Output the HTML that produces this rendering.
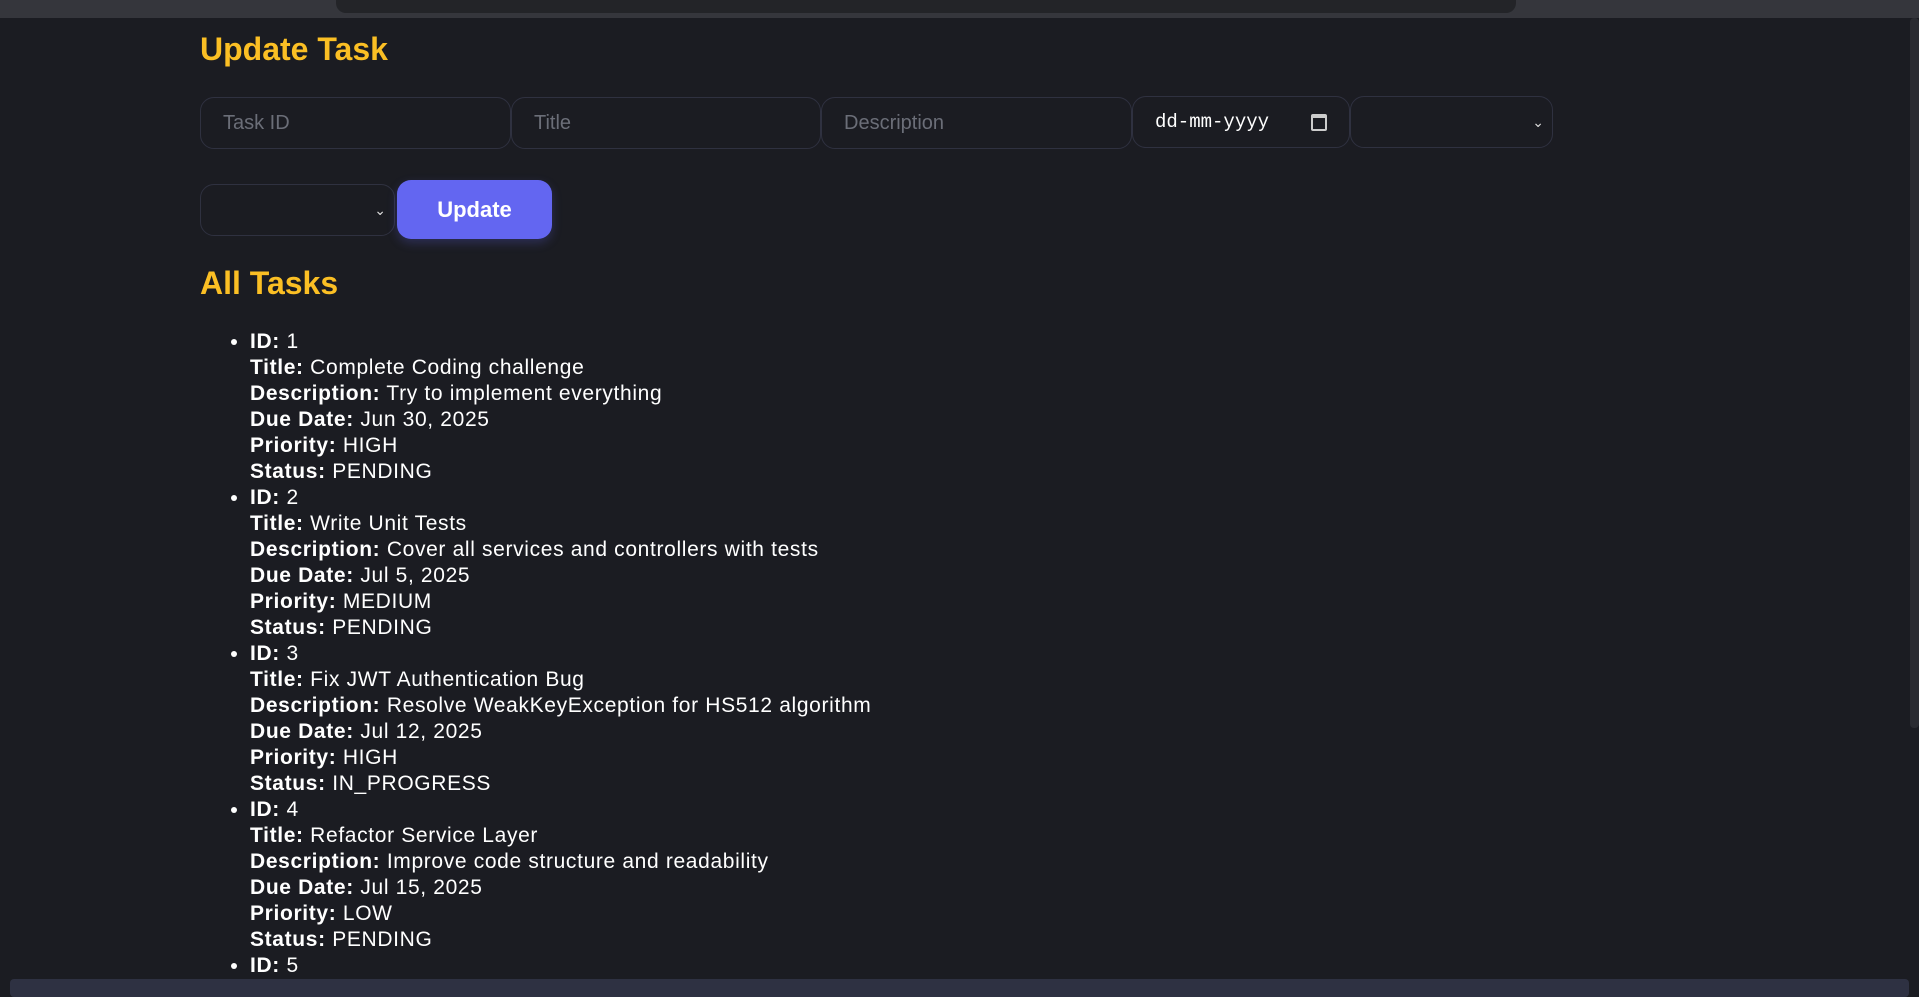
<!DOCTYPE html>
<html><head><meta charset="utf-8"><style>
*{box-sizing:border-box;margin:0;padding:0}
html,body{width:1919px;height:997px;overflow:hidden;background:#1b1c22;font-family:"Liberation Sans",sans-serif;color:#fff}
.chrome{position:absolute;left:0;top:0;width:1919px;height:18px;background:#35363c}
.url{position:absolute;left:336px;top:0;width:1180px;height:13px;background:#232428;border-radius:0 0 10px 10px}
h2{position:absolute;left:200px;color:#fbbf24;font-size:32px;font-weight:bold}
.in{position:absolute;height:52px;border:1px solid #2f3140;border-radius:14px;background:#1b1c22;color:#6b6e78;font-size:20px;padding-left:22px;line-height:50px}
.arrow{position:absolute;right:8px;top:0;color:#ddd;font-size:14px}
.btn{position:absolute;left:397px;top:180px;width:155px;height:59px;background:#6366f1;border-radius:14px;color:#fff;font-weight:bold;font-size:22px;text-align:center;line-height:59px;box-shadow:0 4px 10px rgba(99,102,241,.25)}
ul{position:absolute;left:250px;top:329px;font-size:21px;line-height:26px;list-style:disc;letter-spacing:0.65px}
li{margin:0}
.sbh{position:absolute;left:10px;top:979px;width:1899px;height:18px;background:#2e3142;border-radius:4px}
.sbv{position:absolute;left:1910px;top:18px;width:9px;height:710px;background:#2a2b31;border-radius:4px}
</style></head><body>
<div class="chrome"><div class="url"></div></div>
<h2 style="top:31px">Update Task</h2>
<div class="in" style="left:200px;top:97px;width:311px">Task ID</div>
<div class="in" style="left:511px;top:97px;width:310px">Title</div>
<div class="in" style="left:821px;top:97px;width:311px">Description</div>
<div class="in" style="left:1132px;top:96px;width:218px;color:#fff;font-family:'Liberation Mono',monospace;font-size:19px">dd-mm-yyyy<span style="position:absolute;right:22px;top:17px;width:16px;height:17px;border:2px solid #ccc;border-top-width:4px;border-radius:2px"></span></div>
<div class="in" style="left:1350px;top:96px;width:203px"><span class="arrow">&#8964;</span></div>
<div class="in" style="left:200px;top:184px;width:195px"><span class="arrow">&#8964;</span></div>
<div class="btn">Update</div>
<h2 style="top:265px">All Tasks</h2>
<ul>
<li><b>ID:</b> 1<br><b>Title:</b> Complete Coding challenge<br><b>Description:</b> Try to implement everything<br><b>Due Date:</b> Jun 30, 2025<br><b>Priority:</b> HIGH<br><b>Status:</b> PENDING</li>
<li><b>ID:</b> 2<br><b>Title:</b> Write Unit Tests<br><b>Description:</b> Cover all services and controllers with tests<br><b>Due Date:</b> Jul 5, 2025<br><b>Priority:</b> MEDIUM<br><b>Status:</b> PENDING</li>
<li><b>ID:</b> 3<br><b>Title:</b> Fix JWT Authentication Bug<br><b>Description:</b> Resolve WeakKeyException for HS512 algorithm<br><b>Due Date:</b> Jul 12, 2025<br><b>Priority:</b> HIGH<br><b>Status:</b> IN_PROGRESS</li>
<li><b>ID:</b> 4<br><b>Title:</b> Refactor Service Layer<br><b>Description:</b> Improve code structure and readability<br><b>Due Date:</b> Jul 15, 2025<br><b>Priority:</b> LOW<br><b>Status:</b> PENDING</li>
<li><b>ID:</b> 5</li>
</ul>
<div class="sbv"></div>
<div class="sbh"></div>
</body></html>
